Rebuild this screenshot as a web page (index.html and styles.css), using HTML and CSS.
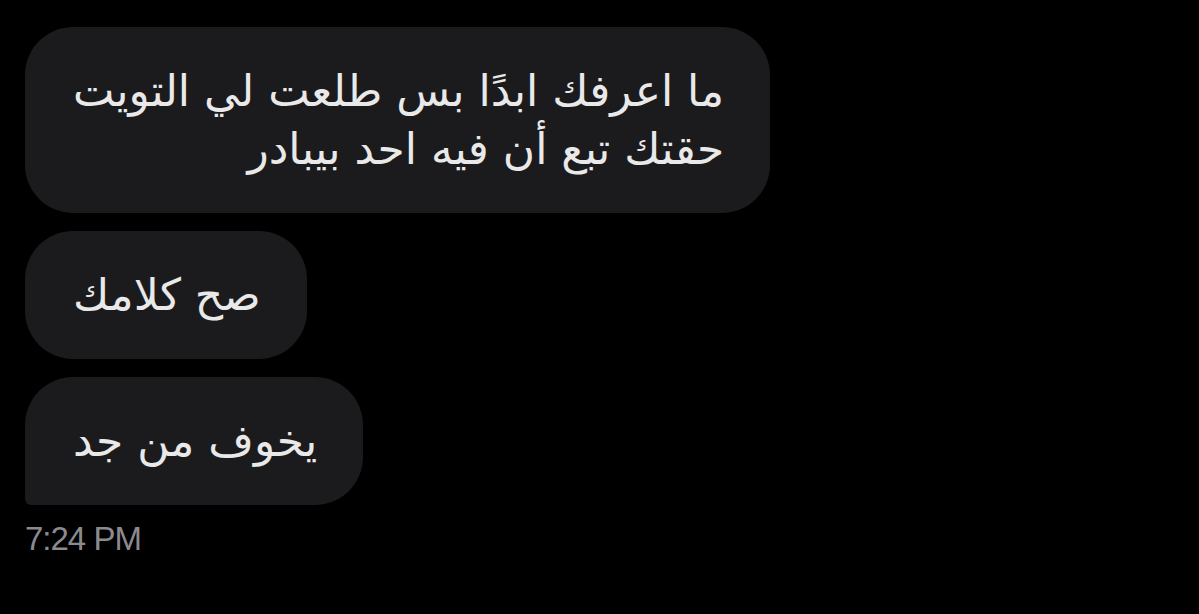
FILE: index.html
```html
<!DOCTYPE html>
<html lang="ar">
<head>
    <meta charset="UTF-8">
    <title>Messages</title>
    <link rel="stylesheet" href="styles.css">
</head>
<body>
    <div class="thread">
        <div class="bubble">ما اعرفك ابدًا بس طلعت لي التويت<br>حقتك تبع أن فيه احد بيبادر</div>
        <div class="bubble">صح كلامك</div>
        <div class="bubble last">يخوف من جد</div>
        <div class="time">7:24 PM</div>
    </div>
</body>
</html>
```

FILE: styles.css
```css
html, body {
    margin: 0;
    padding: 0;
    background: #000;
}

.thread {
    display: flex;
    flex-direction: column;
    align-items: flex-start;
    gap: 18px;
    padding: 27px 0 0 25px;
}

.bubble {
    direction: rtl;
    background: #1b1b1d;
    color: #e9e9e9;
    font-family: "DejaVu Sans", "Noto Sans", sans-serif;
    font-size: 44px;
    line-height: 58px;
    padding: 35px 46px 35px 48px;
    border-radius: 48px;
}

.bubble.last {
    border-bottom-left-radius: 6px;
}

.time {
    margin-top: -3px;
    color: #8b8b8f;
    font-family: "Liberation Sans", Arial, sans-serif;
    font-size: 33px;
    letter-spacing: -1px;
}
```
